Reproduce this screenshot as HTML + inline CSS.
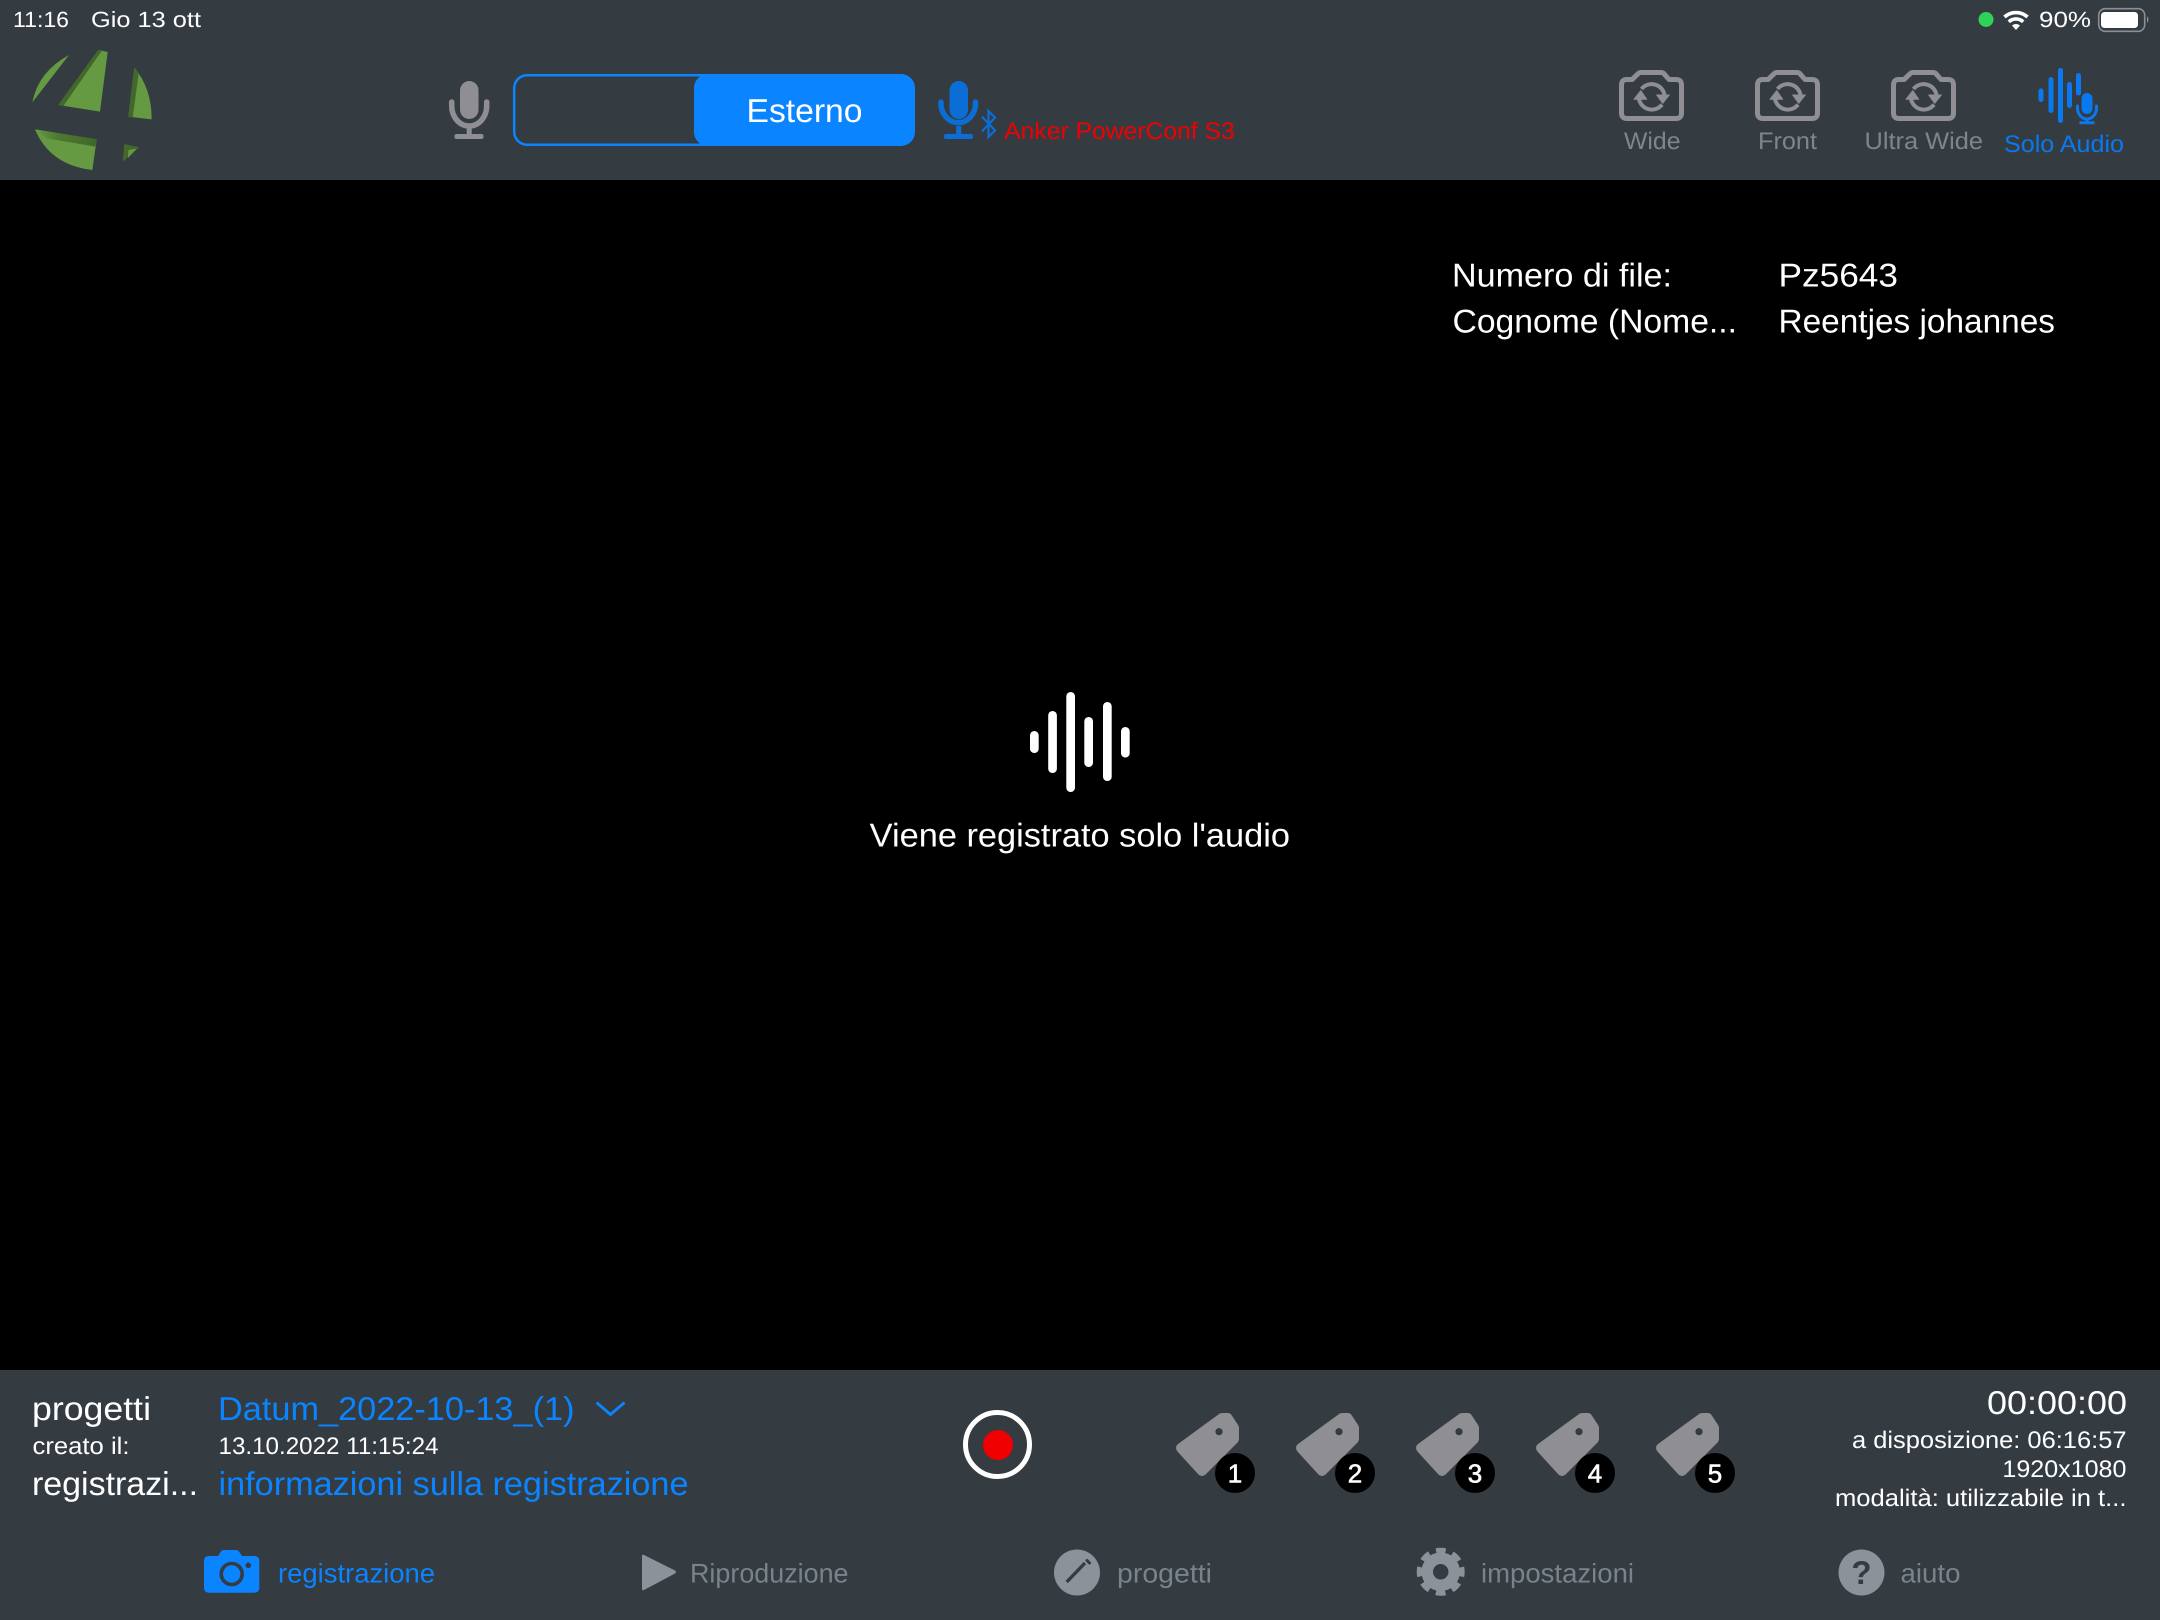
<!DOCTYPE html>
<html><head><meta charset="utf-8"><title>Registrazione</title>
<style>
html,body{margin:0;padding:0;background:#000;width:2160px;height:1620px;overflow:hidden}
svg{display:block}
text{font-family:"Liberation Sans",sans-serif;fill:#fff;text-rendering:geometricPrecision}
.b{fill:#0a84ff}.g{fill:#80858c}.t{fill:#7b838a}
</style></head><body>
<svg xmlns="http://www.w3.org/2000/svg" width="2160" height="1620" viewBox="0 0 2160 1620">
<defs>
<g id="cam">
<path d="M8 9.5H13L19 3.8Q20.5 2.5 22 2.5H42Q44 2.5 45 3.8L50 9.5H57Q62.5 9.5 62.5 15V43Q62.5 48.5 57 48.5H8Q2.5 48.5 2.5 43V15Q2.5 9.5 8 9.5Z" fill="none" stroke="#8e8e93" stroke-width="5" stroke-linejoin="round"/>
<path d="M22.5 19A13 13 0 0 1 45.5 25M20 29A13 13 0 0 0 43 34.6" fill="none" stroke="#8e8e93" stroke-width="4"/>
<path d="M15 29.3H27.7L21.7 20.7ZM37.7 25H50.3L43.7 33.3Z" fill="#8e8e93" stroke="#8e8e93" stroke-linejoin="round"/>
</g>
<g id="tag">
<path d="M1222 1418H1227.500L1234 1428V1439L1202 1471L1181 1448Z" fill="#8e8e93" stroke="#8e8e93" stroke-width="10" stroke-linejoin="round"/>
<circle cx="1219" cy="1431.700" r="3.600" fill="#343c42"/>
<circle cx="1235" cy="1473" r="20" fill="#000"/>
</g>
<linearGradient id="lg" x1="0" x2="1" y1="0" y2="0"><stop offset="0" stop-color="#6a9a45"/><stop offset=".35" stop-color="#4f7a33"/><stop offset="1" stop-color="#3f6628"/></linearGradient>
</defs>

<rect width="2160" height="1620" fill="#000"/>
<rect width="2160" height="180" fill="#343c42"/>
<rect y="1370" width="2160" height="250" fill="#343c42"/>

<!-- status bar -->
<text x="13" y="27" font-size="22" textLength="56" lengthAdjust="spacingAndGlyphs">11:16</text>
<text x="91" y="27" font-size="22" textLength="110" lengthAdjust="spacingAndGlyphs">Gio 13 ott</text>
<circle cx="1986" cy="19.500" r="7.500" fill="#30d158"/>
<path d="M2004.500 17A17 17 0 0 1 2027.500 17M2008.800 21.800A10.500 10.500 0 0 1 2023.200 21.800" fill="none" stroke="#fff" stroke-width="3.600"/>
<path d="M2012 25.500A6 6 0 0 1 2020 25.500L2016 30Z" fill="#fff"/>
<text x="2039" y="27" font-size="22" textLength="52" lengthAdjust="spacingAndGlyphs">90%</text>
<rect x="2098.700" y="8.700" width="46" height="22.600" rx="6.500" fill="none" stroke="#8a8f95" stroke-width="1.600"/>
<rect x="2101" y="12" width="37" height="16" rx="3.500" fill="#fff"/>
<path d="M2147 16Q2150 19.500 2147 23Z" fill="#8a8f95"/>

<!-- logo -->
<g transform="translate(0,30) scale(.33333)">
<path d="M207 75Q115 125 97 217Z" fill="#659a42"/>
<path d="M295 60L323 66L300 245L175 225Z" fill="#659a42"/>
<path d="M295 60L305 63L190 228L175 225Z" fill="#42682a"/>
<path d="M403 113Q455 175 455 268L385 260Z" fill="#659a42"/>
<path d="M403 113L416 130L398 263L385 260Z" fill="#42682a"/>
<path d="M105 298L290 328L277 420Q150 405 105 298Z" fill="#659a42"/>
<path d="M105 298L290 328L286 350L140 325Z" fill="url(#lg)"/>
<path d="M373 342L418 352L368 395Z" fill="#42682a"/>
<path d="M385 360L410 356L384 384Z" fill="#659a42"/>
</g>

<!-- gray mic -->
<g fill="#8e8e93">
<rect x="460" y="81" width="18.500" height="38" rx="9.250"/>
<path d="M451.700 102V106A17.500 20 0 0 0 486.700 106V102" fill="none" stroke="#8e8e93" stroke-width="5.500" stroke-linecap="round"/>
<rect x="466.700" y="126" width="5" height="9"/>
<rect x="454.500" y="134" width="29" height="5" rx="2"/>
</g>

<!-- segmented -->
<rect x="514.200" y="75.200" width="398" height="69.600" rx="13" fill="none" stroke="#0a84ff" stroke-width="2.500"/>
<rect x="694" y="74" width="221" height="72" rx="14" fill="#0a84ff"/>
<text x="746.500" y="122" font-size="33" textLength="116" lengthAdjust="spacingAndGlyphs">Esterno</text>

<!-- blue mic -->
<g fill="#0a6ed6">
<rect x="949.500" y="81" width="18.500" height="38" rx="9.250"/>
<path d="M941 102V106A17.500 20 0 0 0 975.500 106V102" fill="none" stroke="#0a6ed6" stroke-width="5.500" stroke-linecap="round"/>
<rect x="956.200" y="126" width="5" height="9"/>
<rect x="944" y="134" width="29" height="5" rx="2"/>
</g>
<path d="M982 116.500L995 130.500L988.500 137V111L995 117.500L982 131.500" fill="none" stroke="#0a6ed6" stroke-width="2.200"/>
<text x="1004.200" y="139" font-size="24" style="fill:#f00000" textLength="230.500" lengthAdjust="spacingAndGlyphs">Anker PowerConf S3</text>

<!-- cameras -->
<use href="#cam" x="1619" y="70"/>
<use href="#cam" x="1755" y="70"/>
<use href="#cam" x="1891" y="70"/>
<text class="g" x="1624" y="149" font-size="24" textLength="56.500" lengthAdjust="spacingAndGlyphs">Wide</text>
<text class="g" x="1758" y="149" font-size="24" textLength="59" lengthAdjust="spacingAndGlyphs">Front</text>
<text class="g" x="1864.500" y="149" font-size="24" textLength="118.500" lengthAdjust="spacingAndGlyphs">Ultra Wide</text>
<text x="2004" y="152" font-size="24" style="fill:#0a78ee" textLength="120" lengthAdjust="spacingAndGlyphs">Solo Audio</text>
<g fill="none" stroke="#0a78ee" stroke-width="5" stroke-linecap="round">
<path d="M2041 91V99.500M2051 79.500V110.500M2060.500 70.500V120.500M2069.500 84.500V105.500M2078.500 75.500V93"/>
</g>
<rect x="2081.500" y="93" width="11" height="21" rx="5.500" fill="#0a78ee"/>
<path d="M2077.500 106V108A9.500 11 0 0 0 2096.500 108V106" fill="none" stroke="#0a78ee" stroke-width="3" stroke-linecap="round"/>
<path d="M2087 118V122M2079.500 122.800H2094.500" fill="none" stroke="#0a78ee" stroke-width="3"/>

<!-- file info -->
<text x="1452" y="286.700" font-size="33" textLength="220" lengthAdjust="spacingAndGlyphs">Numero di file:</text>
<text x="1452.500" y="332.700" font-size="33" textLength="284.500" lengthAdjust="spacingAndGlyphs">Cognome (Nome...</text>
<text x="1778.500" y="286.700" font-size="33" textLength="119.500" lengthAdjust="spacingAndGlyphs">Pz5643</text>
<text x="1778.500" y="332.700" font-size="33" textLength="276.500" lengthAdjust="spacingAndGlyphs">Reentjes johannes</text>

<!-- center -->
<g fill="#fff">
<rect x="1030" y="731" width="8.700" height="22" rx="4.300"/>
<rect x="1048.200" y="711" width="8.700" height="62" rx="4.300"/>
<rect x="1066.300" y="692" width="8.700" height="100" rx="4.300"/>
<rect x="1084.300" y="717" width="8.700" height="50" rx="4.300"/>
<rect x="1103" y="702" width="8.700" height="79" rx="4.300"/>
<rect x="1121" y="727" width="8.700" height="30.500" rx="4.300"/>
</g>
<text x="869.700" y="846.700" font-size="33" textLength="420.300" lengthAdjust="spacingAndGlyphs">Viene registrato solo l'audio</text>

<!-- bottom left -->
<text x="32" y="1420" font-size="33" textLength="119" lengthAdjust="spacingAndGlyphs">progetti</text>
<text class="b" x="218" y="1420" font-size="33" textLength="356.500" lengthAdjust="spacingAndGlyphs">Datum_2022-10-13_(1)</text>
<path d="M596.500 1402.500L610.500 1414.500L624.500 1402.500" fill="none" stroke="#0a84ff" stroke-width="2.800"/>
<text x="32.500" y="1454" font-size="24" textLength="97" lengthAdjust="spacingAndGlyphs">creato il:</text>
<text x="218.500" y="1454" font-size="24" textLength="220" lengthAdjust="spacingAndGlyphs">13.10.2022 11:15:24</text>
<text x="32" y="1495" font-size="33" textLength="166" lengthAdjust="spacingAndGlyphs">registrazi...</text>
<text class="b" x="218.500" y="1495" font-size="33" textLength="470" lengthAdjust="spacingAndGlyphs">informazioni sulla registrazione</text>

<!-- record -->
<circle cx="997.500" cy="1444.500" r="32" fill="none" stroke="#fff" stroke-width="5"/>
<circle cx="998" cy="1445" r="15" fill="#f00000"/>

<!-- tags -->
<use href="#tag"/><use href="#tag" x="120"/><use href="#tag" x="240"/><use href="#tag" x="360"/><use href="#tag" x="480"/>
<g font-size="26" text-anchor="middle" stroke="#fff" stroke-width=".6">
<text x="1235" y="1482.500">1</text><text x="1355" y="1482.500">2</text><text x="1475" y="1482.500">3</text><text x="1595" y="1482.500">4</text><text x="1715" y="1482.500">5</text>
</g>

<!-- bottom right -->
<text x="1987" y="1414" font-size="33" textLength="140" lengthAdjust="spacingAndGlyphs">00:00:00</text>
<text x="1852" y="1448" font-size="24" textLength="274.500" lengthAdjust="spacingAndGlyphs">a disposizione: 06:16:57</text>
<text x="2002.400" y="1477" font-size="24" textLength="124" lengthAdjust="spacingAndGlyphs">1920x1080</text>
<text x="1835" y="1506" font-size="24" textLength="291.500" lengthAdjust="spacingAndGlyphs">modalità: utilizzabile in t...</text>

<!-- tabs -->
<path d="M209 1556H218L221 1551.500Q222 1550 224 1550H236Q238 1550 239 1551.500L242 1556H254Q259.300 1556 259.300 1561V1588Q259.300 1592.700 254 1592.700H209Q204 1592.700 204 1588V1561Q204 1556 209 1556Z" fill="#0a84ff"/>
<circle cx="231.700" cy="1574" r="10.500" fill="#0a84ff" stroke="#343c42" stroke-width="3.600"/>
<circle cx="248.300" cy="1565.300" r="2.800" fill="#343c42"/>
<text class="b" x="278" y="1582.500" font-size="27" textLength="157" lengthAdjust="spacingAndGlyphs">registrazione</text>

<path d="M644 1555L675 1570.500Q677 1572 675 1573.500L644 1590Q642 1591 642 1589V1556Q642 1554 644 1555Z" fill="#8b9299"/>
<text class="t" x="690" y="1582.500" font-size="27" textLength="158.500" lengthAdjust="spacingAndGlyphs">Riproduzione</text>

<circle cx="1077" cy="1572.500" r="23" fill="#8b9299"/>
<path d="M1066.700 1582L1085 1563" stroke="#343c42" stroke-width="3.400" fill="none"/>
<path d="M1087 1560.500L1089.500 1563" stroke="#343c42" stroke-width="3" fill="none" stroke-linecap="round"/>
<text class="t" x="1117" y="1582.500" font-size="27" textLength="95" lengthAdjust="spacingAndGlyphs">progetti</text>

<circle cx="1440.700" cy="1571.800" r="13.500" fill="none" stroke="#8b9299" stroke-width="11.500"/>
<circle cx="1440.700" cy="1571.800" r="21" fill="none" stroke="#8b9299" stroke-width="6" stroke-dasharray="9.500 6.990" stroke-dashoffset="4.750"/>
<text class="t" x="1481" y="1582.500" font-size="27" textLength="153" lengthAdjust="spacingAndGlyphs">impostazioni</text>

<circle cx="1861.500" cy="1572.500" r="23" fill="#8b9299"/>
<text x="1861.500" y="1584" font-size="33" text-anchor="middle" style="fill:#343c42;font-weight:bold">?</text>
<text class="t" x="1900.500" y="1582.500" font-size="27" textLength="60" lengthAdjust="spacingAndGlyphs">aiuto</text>
</svg>
</body></html>
